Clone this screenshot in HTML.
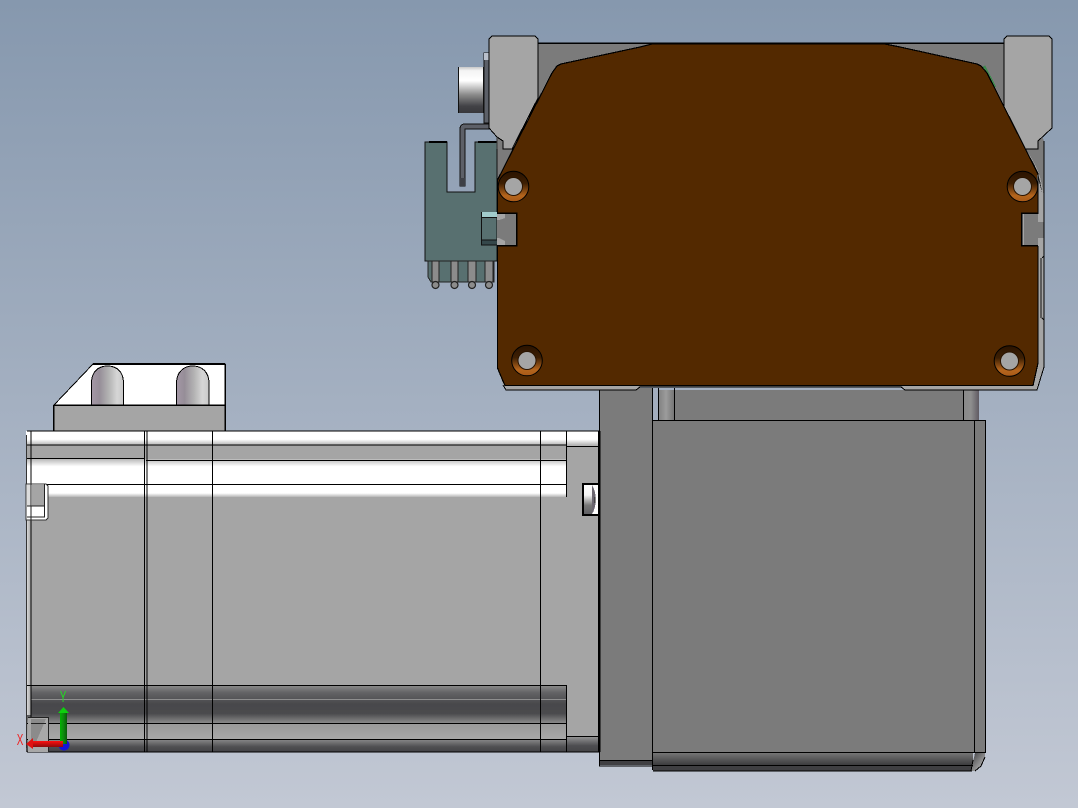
<!DOCTYPE html>
<html><head><meta charset="utf-8"><style>
html,body{margin:0;padding:0;width:1078px;height:808px;overflow:hidden;background:#a5afc0}
svg{display:block}
</style></head><body>
<svg width="1078" height="808" viewBox="0 0 1078 808" xmlns="http://www.w3.org/2000/svg">
<defs>
<linearGradient id="bg" x1="0" y1="0" x2="0" y2="1"><stop offset="0" stop-color="#8698ae"/><stop offset="1" stop-color="#c2c8d4"/></linearGradient>
<linearGradient id="cyl" x1="0" y1="0" x2="0" y2="1"><stop offset="0" stop-color="#c8c8c8"/><stop offset=".08" stop-color="#f4f4f4"/><stop offset=".3" stop-color="#fff"/><stop offset=".6" stop-color="#8c8c8c"/><stop offset=".85" stop-color="#424246"/><stop offset="1" stop-color="#38383c"/></linearGradient>
<linearGradient id="hole" x1="0" y1="0" x2="0" y2="1"><stop offset="0" stop-color="#2a1300"/><stop offset=".4" stop-color="#3d1f03"/><stop offset=".8" stop-color="#b5651d"/><stop offset="1" stop-color="#a85a18"/></linearGradient>
<linearGradient id="dome" x1="0" y1="0" x2="1" y2="0"><stop offset="0" stop-color="#a497a6"/><stop offset=".25" stop-color="#968e98"/><stop offset=".55" stop-color="#b4b4b4"/><stop offset=".8" stop-color="#d6d6d6"/><stop offset="1" stop-color="#c8c8c8"/></linearGradient>
<linearGradient id="w1" x1="0" y1="431" x2="0" y2="445" gradientUnits="userSpaceOnUse"><stop offset="0" stop-color="#fff"/><stop offset=".6" stop-color="#fff"/><stop offset="1" stop-color="#b4b4b4"/></linearGradient>
<linearGradient id="w2" x1="0" y1="459" x2="0" y2="484" gradientUnits="userSpaceOnUse"><stop offset="0" stop-color="#b8b8b8"/><stop offset=".3" stop-color="#fff"/><stop offset="1" stop-color="#fff"/></linearGradient>
<linearGradient id="w3" x1="0" y1="484" x2="0" y2="497" gradientUnits="userSpaceOnUse"><stop offset="0" stop-color="#fff"/><stop offset=".7" stop-color="#fff"/><stop offset="1" stop-color="#b4b4b4"/></linearGradient>
<linearGradient id="d1" x1="0" y1="685" x2="0" y2="723" gradientUnits="userSpaceOnUse"><stop offset="0" stop-color="#8e8e8e"/><stop offset=".2" stop-color="#636365"/><stop offset=".5" stop-color="#48484b"/><stop offset=".75" stop-color="#4a4a4d"/><stop offset="1" stop-color="#8a8a8a"/></linearGradient>
<linearGradient id="d2" x1="0" y1="723" x2="0" y2="739" gradientUnits="userSpaceOnUse"><stop offset="0" stop-color="#999"/><stop offset="1" stop-color="#a8a8a8"/></linearGradient>
<linearGradient id="d3" x1="0" y1="739" x2="0" y2="752" gradientUnits="userSpaceOnUse"><stop offset="0" stop-color="#8c8c8c"/><stop offset=".6" stop-color="#4f4f52"/><stop offset="1" stop-color="#434346"/></linearGradient>
<linearGradient id="d4" x1="0" y1="736" x2="0" y2="752" gradientUnits="userSpaceOnUse"><stop offset="0" stop-color="#9a9a9a"/><stop offset=".6" stop-color="#4e4e51"/><stop offset="1" stop-color="#444447"/></linearGradient>
<linearGradient id="d5" x1="0" y1="752" x2="0" y2="765" gradientUnits="userSpaceOnUse"><stop offset="0" stop-color="#7a7a7a"/><stop offset="1" stop-color="#3c3c3e"/></linearGradient>
<linearGradient id="post" x1="0" y1="0" x2="1" y2="0"><stop offset="0" stop-color="#7e7e7e"/><stop offset=".5" stop-color="#9c9c9c"/><stop offset="1" stop-color="#767676"/></linearGradient>
<linearGradient id="post2" x1="0" y1="0" x2="1" y2="0"><stop offset="0" stop-color="#888"/><stop offset=".5" stop-color="#8e8e8e"/><stop offset="1" stop-color="#5f5a62"/></linearGradient>
<linearGradient id="corner" x1="0" y1="0" x2="1" y2="1"><stop offset="0" stop-color="#3c3c3e"/><stop offset="1" stop-color="#c8c8c8"/></linearGradient>
<linearGradient id="bolt" x1="0" y1="0" x2="0" y2="1"><stop offset="0" stop-color="#fff"/><stop offset=".35" stop-color="#f4f4f4"/><stop offset=".7" stop-color="#777"/><stop offset="1" stop-color="#606064"/></linearGradient>
<linearGradient id="edge" x1="0" y1="0" x2="1" y2="0"><stop offset="0" stop-color="#e4e4e4"/><stop offset="1" stop-color="#a5a5a5"/></linearGradient>
<linearGradient id="ga" x1="0" y1="0" x2="1" y2="0"><stop offset="0" stop-color="#00b400"/><stop offset=".5" stop-color="#0e8a0e"/><stop offset="1" stop-color="#075c07"/></linearGradient>
<linearGradient id="ra" x1="0" y1="0" x2="0" y2="1"><stop offset="0" stop-color="#ff1010"/><stop offset="1" stop-color="#8c0a0a"/></linearGradient>
</defs>
<rect width="1078" height="808" fill="url(#bg)"/>

<g stroke-linejoin="miter" shape-rendering="crispEdges">
<!-- top block with domes -->
<polygon points="54,405 93,364 225,364 225,405" fill="#fff" stroke="#000"/>
<line x1="93" y1="364" x2="225" y2="364" stroke="#000" stroke-width="2"/>
<rect x="54" y="406" width="171" height="25" fill="#a5a5a5"/>
<path d="M54 405H225M53.500 405V431M225 364V431" stroke="#000" fill="none" stroke-width="1.500"/>
<path d="M91.500 405V383C91.500 372 98 366 107.500 366C117 366 123.500 372 123.500 383V405Z" fill="url(#dome)" stroke="#000"/>
<path d="M176.500 405V383C176.500 372 184 366 192.500 366C202 366 209 372 209 383V405Z" fill="url(#dome)" stroke="#000"/>

<!-- motor -->
<rect x="26" y="431" width="573" height="321" fill="#a5a5a5"/>
<rect x="26" y="431" width="573" height="14" fill="url(#w1)"/>
<rect x="26" y="459" width="540" height="25" fill="url(#w2)"/>
<rect x="26" y="484" width="540" height="13" fill="url(#w3)"/>
<rect x="566" y="431" width="33" height="15" fill="url(#w1)"/>
<rect x="26" y="685" width="540" height="38" fill="url(#d1)"/>
<rect x="26" y="723" width="540" height="16" fill="url(#d2)"/>
<rect x="26" y="739" width="540" height="13" fill="url(#d3)"/>
<rect x="566" y="736" width="33" height="16" fill="url(#d4)"/>
<rect x="26" y="699" width="540" height="1" fill="#8e8e8e"/>
<rect x="26" y="520" width="5" height="195" fill="url(#edge)"/>
<path d="M27 431H599M26 445H566M26 458.500H144M146 460.500H566M26 484.500H566M566 446.500H599M26 685.500H566M26 723.500H566M26 739.500H566M566 736.500H599M27 752H599" stroke="#000" fill="none"/>
<path d="M31 431V752M144.500 431V752M147 431V752M212.500 431V752M540.500 431V752M566.500 431V497M566.500 685V752" stroke="#000" fill="none" stroke-width="1.200"/>
<path d="M26.500 435V748" stroke="#333" fill="none"/>
<!-- left slot -->
<path d="M26 484H46L48 486V518L46 520H26Z" fill="#fff" stroke="#333"/>
<rect x="32" y="485" width="12" height="21" fill="#a5a5a5"/>
<rect x="27" y="485" width="4" height="21" fill="#dcdcdc"/>
<rect x="27" y="507" width="17" height="10" fill="#fff"/>
<path d="M27 506H44.500V484M31 484V520M44.500 484V517H27" stroke="#222" fill="none"/>
<!-- lower left slot -->
<rect x="28" y="718" width="20" height="34" fill="#a8a8a8"/>
<polygon points="31,719 46,719 36,742 31,744" fill="#8b8b8b"/>
<path d="M28 717.500H48.500V752M31 723.500H46" stroke="#222" fill="none"/>
<!-- bolt -->
<rect x="582" y="483" width="17" height="33" fill="#000"/>
<rect x="584" y="485" width="8" height="29" fill="url(#bolt)"/>
<rect x="592" y="485" width="7" height="29" fill="#fff"/>
<path d="M592 485C597 492 597 507 592 514Z" fill="#6b6670"/>
<path d="M595 497V503" stroke="#222"/>

<!-- flange + gearbox -->
<rect x="599" y="388" width="53" height="372" fill="#7b7b7b"/>
<rect x="599" y="760" width="53" height="5" fill="#3f3f42"/>
<path d="M599.500 388V766H652M599 760.500H652" stroke="#000" fill="none"/>
<line x1="599" y1="431" x2="599" y2="752" stroke="#000" stroke-width="2.500"/>
<rect x="652" y="390" width="6" height="30" fill="#a3adbd"/>
<rect x="658" y="390" width="16" height="30" fill="url(#post)"/>
<rect x="674" y="390" width="289" height="30" fill="#7b7b7b"/>
<rect x="963" y="390" width="16" height="30" fill="url(#post2)"/>
<path d="M652.500 388V420M658.500 388V420M674.500 388V420M963.500 388V420" stroke="#000" fill="none"/>
<rect x="652" y="420" width="333" height="332" fill="#7b7b7b"/>
<rect x="652" y="752" width="321" height="13" fill="url(#d5)"/>
<rect x="653" y="765" width="319" height="6" fill="#3f3f42"/>
<polygon points="975,753 985,753 985,757 982,765 975,771 971,771 973,762" fill="url(#corner)"/>
<path d="M652 420.500H985.500V753M652.500 420V770M974.500 420V753M652 752.500H985M652 765.500H973M653 771H972M985 757L981 766L975 771M973 760L971 771" stroke="#000" fill="none"/>

<!-- back plate -->
<polygon points="497,137 489,60 538,43 1004,43 1044,141 1044,367 1037,390 905,390 901,387 640,387 636,390 506,390 503,385 497,368" fill="#7b7b7b"/>
<polygon points="1023,149 1044,149 1044,367 1037,390 905,390 901,385 640,385 636,390 506,390 503,385 497,368" fill="#a5a5a5"/>
<polygon points="1024,149 1044,149 1044,200 1038,200" fill="#7b7b7b"/>
<path d="M538 43H1004" stroke="#000" stroke-width="1.500" fill="none"/>
<path d="M1044 141V367L1037 390H905L901 387H640L636 390H506L503 385" stroke="#000" fill="none"/>
<path d="M1027 153C1035 165 1041 176 1043 200" stroke="#a5a5a5" stroke-width="2" fill="none"/>
<path d="M1025 150C1034 163 1040 175 1042 197" stroke="#222" fill="none"/>
<path d="M1041 258V318" stroke="#111" fill="none"/>
<path d="M1042 258L1044 256M1042 318L1044 320" stroke="#111" fill="none"/>

<!-- left hardware -->
<rect x="484" y="53" width="5" height="70" fill="#5c6068" stroke="#111"/>
<rect x="484" y="53" width="5" height="7" fill="#b9c0cc"/>
<rect x="458" y="67" width="25" height="46" fill="url(#cyl)"/>
<path d="M458.500 67V113M483.500 67V113" stroke="#111" fill="none"/>
<path d="M489 124H465Q460 124 460 129V186H465V129H489Z" fill="#5d6068" stroke="#111"/>
<rect x="460" y="178" width="5" height="8" fill="#3e4046"/>

<!-- teal part -->
<polygon points="425,142 447,142 447,192 475,192 475,142 497,142 497,261 425,261" fill="#587070" stroke="#111"/>
<path d="M429 142H447M478 142H497" stroke="#000" stroke-width="2" fill="none"/>
<path d="M428 261V277L431 282H494V261Z" fill="#587070" stroke="#222"/>
<g fill="#8c8c8c" stroke="#222">
<path d="M432 261H439V282H432Z"/>
<path d="M451 261H458V282H451Z"/>
<path d="M468 261H476V282H468Z"/>
<path d="M485 261H493V282H485Z"/>
</g>
<rect x="481" y="212" width="16" height="5" fill="#a2cccc"/>
<rect x="481" y="240" width="16" height="5" fill="#34474a"/>
<path d="M481.500 212V245H497M481 217.500H497M481 240H497" stroke="#111" fill="none"/>

<!-- brackets -->
<polygon points="489,39 492,36 535,36 538,39 538,98 512,149 503,149 503,141 497,137 489,128" fill="#a5a5a5" stroke="#000"/>
<polygon points="1004,39 1007,36 1049,36 1052,39 1052,128 1038,141 1038,149 1023,149 1004,108" fill="#a5a5a5" stroke="#000"/>
<path d="M497 137V149" stroke="#333" fill="none"/>

<!-- brown face -->
<path d="M984 66L995 87" stroke="#3f8a4e" stroke-width="2.500" fill="none"/>
<polygon points="497.500,368 503,381 505,385 1033,385 1038,363 1038,174 987,73 981,66 977,64 900,47 885,44 652,44 640,47 561,64 557,66 552,73 497.500,180" fill="#532900"/>
<path d="M497.500 180V368L503 381L505 385.500H1033L1038 363V174L987 73L981 66L977 64L900 47L885 44H652L640 47L561 64L557 66L552 73L497.500 180" stroke="#000" fill="none" stroke-width="1.200"/>

<!-- notches -->
<rect x="497" y="213" width="19" height="33" fill="#7b7b7b"/>
<polygon points="497,213 505,213 505,218 499,220 497,220" fill="#a5a5a5"/>
<polygon points="497,238 499,238 505,241 505,245 497,245" fill="#a5a5a5"/>
<path d="M497 213H516.500V245.500H497" stroke="#000" stroke-width="1.500" fill="none"/>
<rect x="1021" y="213" width="17" height="33" fill="#7b7b7b"/>
<rect x="1022" y="214" width="2" height="31" fill="#a5a5a5"/>
<path d="M1038 213H1021.500V245.500H1038" stroke="#000" stroke-width="1.500" fill="none"/>
<polygon points="1037,174 1044,200 1044,213 1038,213" fill="#a5a5a5"/>
<rect x="1038" y="214" width="6" height="8" fill="#a5a5a5"/>
<rect x="1038" y="238" width="6" height="8" fill="#a5a5a5"/>
<rect x="1038" y="222" width="6" height="16" fill="#7b7b7b"/>
<path d="M1038 174V213M1038 246V363M1044 141V367" stroke="#000" fill="none"/>
</g>

<!-- pin tips -->
<g fill="#8c8c8c" stroke="#222" stroke-width="1.200">
<circle cx="435.500" cy="285" r="3.500"/><circle cx="454.500" cy="285" r="3.500"/><circle cx="472" cy="285" r="3.500"/><circle cx="489" cy="285" r="3.500"/>
</g>

<!-- holes -->
<g stroke="#000">
<circle cx="513.500" cy="186.500" r="15.300" fill="url(#hole)"/><circle cx="513.500" cy="186.500" r="9" fill="#a5a5a5" stroke="#2a1400"/>
<circle cx="1022.500" cy="186.500" r="15.300" fill="url(#hole)"/><circle cx="1022.500" cy="186.500" r="9" fill="#a5a5a5" stroke="#2a1400"/>
<circle cx="527" cy="360.500" r="15.300" fill="url(#hole)"/><circle cx="527" cy="360.500" r="9" fill="#a5a5a5" stroke="#2a1400"/>
<circle cx="1009.500" cy="361" r="15.300" fill="url(#hole)"/><circle cx="1009.500" cy="361" r="9" fill="#a5a5a5" stroke="#2a1400"/>
</g>

<!-- triad -->
<circle cx="64" cy="745" r="5.500" fill="#1414d8"/>
<rect x="60" y="713" width="7" height="31" fill="url(#ga)"/>
<polygon points="58,713 63.500,707 69,713" fill="#0fd00f"/>
<rect x="32" y="741" width="31" height="6" fill="url(#ra)"/>
<polygon points="26,744 33,738 33,749" fill="#e01010"/>
<text transform="translate(63 702) scale(.62 1)" font-family="Liberation Sans, sans-serif" font-size="16" fill="#22dd22" text-anchor="middle">Y</text>
<text transform="translate(20 745) scale(.62 1)" font-family="Liberation Sans, sans-serif" font-size="16" fill="#ee2020" text-anchor="middle">X</text>
</svg>
</body></html>
